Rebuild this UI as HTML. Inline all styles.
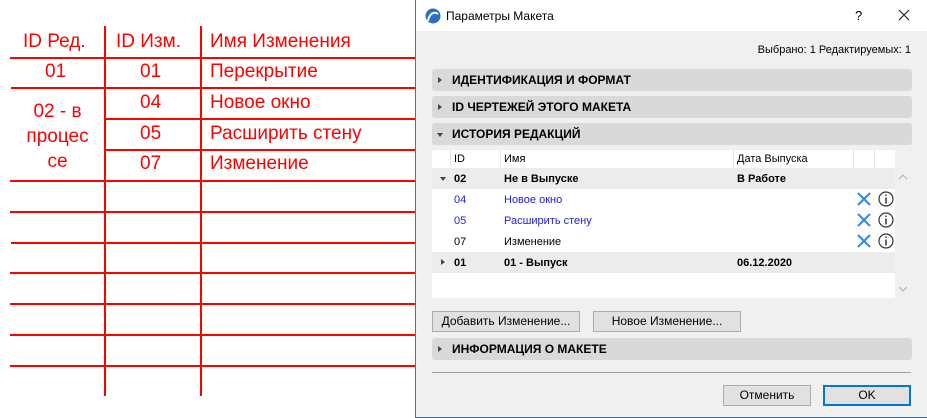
<!DOCTYPE html>
<html><head><meta charset="utf-8">
<style>
*{margin:0;padding:0;box-sizing:border-box}
body{width:927px;height:418px;background:#fff;position:relative;overflow:hidden;font-family:"Liberation Sans","DejaVu Sans",sans-serif}
.a{position:absolute}
.h{position:absolute;height:2px;background:#f00}
.v{position:absolute;width:2px;background:#f00}
.r{position:absolute;color:#f00;font-size:19px;line-height:22px}
.dl{position:absolute;left:415px;top:0;width:512px;height:418px;background:#f0f0f0;border-left:1px solid #2b79d0;border-bottom:1px solid #2b79d0}
.t{position:absolute;font-size:12px;color:#000;white-space:nowrap}
.sec{position:absolute;left:16px;width:480px;height:22px;background:#d9d9d9;border-radius:3px;font-size:12px;font-weight:bold;line-height:22px;padding-left:20px}
.tri{position:absolute;left:6px;top:8px;width:0;height:0;border-top:3px solid transparent;border-bottom:3px solid transparent;border-left:4px solid #444}
.trd{position:absolute;left:5px;top:10px;width:0;height:0;border-left:3.5px solid transparent;border-right:3.5px solid transparent;border-top:4px solid #444}
.row{position:absolute;left:16px;width:463px;height:21px;font-size:12px;line-height:23px}
.btn{position:absolute;height:21px;background:#e1e1e1;border:1px solid #adadad;font-size:12px;line-height:19px;text-align:center}
</style></head><body>
<div class="v" style="left:104px;top:26px;height:370px"></div>
<div class="v" style="left:200px;top:26px;height:370px"></div>
<div class="h" style="left:10px;top:57px;width:405px"></div>
<div class="h" style="left:11px;top:87px;width:404px"></div>
<div class="h" style="left:104px;top:118px;width:311px"></div>
<div class="h" style="left:104px;top:149px;width:311px"></div>
<div class="h" style="left:10px;top:180px;width:405px"></div>
<div class="h" style="left:10px;top:211px;width:405px"></div>
<div class="h" style="left:11px;top:242px;width:404px"></div>
<div class="h" style="left:10px;top:272px;width:405px"></div>
<div class="h" style="left:10px;top:303px;width:405px"></div>
<div class="h" style="left:10px;top:334px;width:405px"></div>
<div class="h" style="left:10px;top:365px;width:405px"></div>
<div class="r" style="left:23px;top:31px">ID Ред.</div>
<div class="r" style="left:116px;top:31px">ID Изм.</div>
<div class="r" style="left:210px;top:31px">Имя Изменения</div>
<div class="r" style="left:45px;top:61px">01</div>
<div class="r" style="left:140px;top:61px">01</div>
<div class="r" style="left:210px;top:61px">Перекрытие</div>
<div class="r" style="left:140px;top:92px">04</div>
<div class="r" style="left:210px;top:92px">Новое окно</div>
<div class="r" style="left:140px;top:123px">05</div>
<div class="r" style="left:210px;top:123px">Расширить стену</div>
<div class="r" style="left:140px;top:153px">07</div>
<div class="r" style="left:210px;top:153px">Изменение</div>
<div class="r" style="left:10px;top:99px;width:95px;text-align:center;line-height:25px">02 - в<br>процес<br>се</div>

<div class="dl">
 <div class="a" style="left:0;top:0;width:511px;height:31px;background:#fff"></div>
 <svg class="a" style="left:9px;top:8px" width="16" height="16" viewBox="0 0 16 16"><circle cx="8" cy="8" r="7.5" fill="#2b6fc7"/><path d="M3 13 C4 6 9 3 13 6" stroke="#fff" stroke-width="2" fill="none"/></svg>
 <div class="t" style="left:30px;top:9px">Параметры Макета</div>
 <div class="t" style="left:439px;top:8px;font-size:13px">?</div>
 <svg class="a" style="left:482px;top:9px" width="12" height="12"><path d="M1 1L11 11M11 1L1 11" stroke="#222" stroke-width="1.2"/></svg>
 <div class="t" style="right:16px;top:44px;font-size:11px">Выбрано: 1 Редактируемых: 1</div>
 <div class="sec" style="top:69px"><div class="tri"></div>ИДЕНТИФИКАЦИЯ И ФОРМАТ</div>
 <div class="sec" style="top:96px"><div class="tri"></div>ID ЧЕРТЕЖЕЙ ЭТОГО МАКЕТА</div>
 <div class="sec" style="top:123px"><div class="trd"></div>ИСТОРИЯ РЕДАКЦИЙ</div>
 <div class="a" style="left:16px;top:150px;width:463px;height:148px;background:#fff"></div>
 <div class="a" style="left:34px;top:150px;width:1px;height:18px;background:#e5e5e5"></div>
 <div class="a" style="left:84px;top:150px;width:1px;height:18px;background:#e5e5e5"></div>
 <div class="a" style="left:317px;top:150px;width:1px;height:18px;background:#e5e5e5"></div>
 <div class="a" style="left:437px;top:150px;width:1px;height:18px;background:#e5e5e5"></div>
 <div class="a" style="left:458px;top:150px;width:1px;height:18px;background:#e5e5e5"></div>
 <div class="row" style="top:149px;line-height:21px;font-size:11px"><span class="a" style="left:22px">ID</span><span class="a" style="left:72px">Имя</span><span class="a" style="left:305px">Дата Выпуска</span></div>
 <div class="row" style="top:168px;background:#ececec;font-weight:bold;font-size:11px"><div class="trd" style="left:8px;top:9px"></div><span class="a" style="left:22px">02</span><span class="a" style="left:72px">Не в Выпуске</span><span class="a" style="left:305px">В Работе</span></div>
 <div class="row" style="top:189px;color:#2020e0;font-size:11px"><span class="a" style="left:22px">04</span><span class="a" style="left:72px">Новое окно</span></div>
 <div class="row" style="top:210px;color:#2020e0;font-size:11px"><span class="a" style="left:22px">05</span><span class="a" style="left:72px">Расширить стену</span></div>
 <div class="row" style="top:231px;font-size:11px"><span class="a" style="left:22px">07</span><span class="a" style="left:72px">Изменение</span></div>
 <div class="row" style="top:252px;background:#ececec;font-weight:bold;font-size:11px"><div class="tri" style="left:9px;top:7px"></div><span class="a" style="left:22px">01</span><span class="a" style="left:72px">01 - Выпуск</span><span class="a" style="left:305px">06.12.2020</span></div>
 <svg class="a" style="left:440px;top:191px" width="40" height="60">
  <g stroke="#2e86f0" stroke-width="2"><path d="M2 2L14 14M14 2L2 14"/><path d="M2 23L14 35M14 23L2 35"/><path d="M2 44L14 56M14 44L2 56"/></g>
  <g fill="none" stroke="#333" stroke-width="1.2"><circle cx="30" cy="8" r="7"/><circle cx="30" cy="29" r="7"/><circle cx="30" cy="50" r="7"/></g>
  <g stroke="#333" stroke-width="1.5"><path d="M30 6.5V12.5M30 27.5V33.5M30 48.5V54.5"/><path d="M30 3.5V5M30 24.5V26M30 45.5V47"/></g>
 </svg>
 <svg class="a" style="left:482px;top:173px" width="10" height="124"><path d="M1 6L5 2L9 6" stroke="#bbb" fill="none" stroke-width="1.3"/><path d="M1 114L5 118L9 114" stroke="#bbb" fill="none" stroke-width="1.3"/></svg>
 <div class="btn" style="left:16px;top:311px;width:148px">Добавить Изменение...</div>
 <div class="btn" style="left:177px;top:311px;width:148px">Новое Изменение...</div>
 <div class="sec" style="top:338px"><div class="tri"></div>ИНФОРМАЦИЯ О МАКЕТЕ</div>
 <div class="a" style="left:16px;top:372px;width:479px;height:1px;background:#a0a0a0"></div>
 <div class="btn" style="left:307px;top:385px;width:88px">Отменить</div>
 <div class="btn" style="left:407px;top:385px;width:88px;border:2px solid #0078d7;line-height:17px">OK</div>
</div>
</body></html>
